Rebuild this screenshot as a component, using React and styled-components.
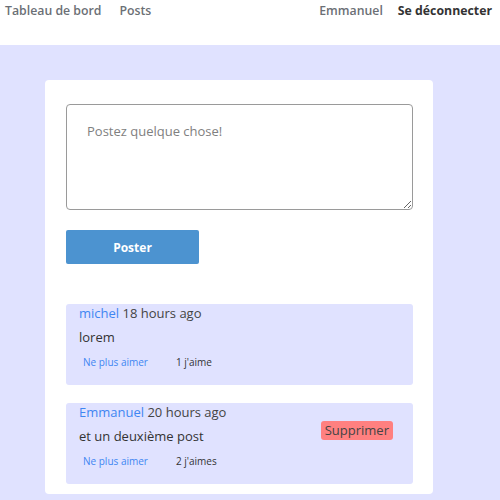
import React from 'react';
import styled, { createGlobalStyle } from 'styled-components';

const GlobalStyle = createGlobalStyle`
    html, body {
        margin: 0;
        padding: 0;
        background: #e0e2ff;
        font-family: 'Open Sans', 'Liberation Sans', sans-serif;
    }
`;

const Nav = styled.nav`
    height: 45px;
    background: #fff;
    display: flex;
    align-items: flex-start;
    justify-content: space-between;
    padding: 2px 8px 0 5px;
    box-sizing: border-box;
`;

const NavGroup = styled.div`
    display: flex;
    gap: ${(p) => p.$gap || 18}px;
`;

const NavLink = styled.a`
    font-size: 12.3px;
    font-weight: ${(p) => (p.$strong ? 700 : 600)};
    color: ${(p) => (p.$strong ? '#333' : '#6b6f75')};
    text-decoration: none;
`;

const Main = styled.main`
    padding: 35px 0 0 45px;
`;

const Card = styled.div`
    width: 388px;
    background: #fff;
    border-radius: 4px;
    padding: 24px 20px 10px 21px;
    box-sizing: border-box;
`;

const TextArea = styled.textarea`
    display: block;
    width: 347px;
    height: 106px;
    box-sizing: border-box;
    border: 1px solid #9a9a9a;
    border-radius: 4px;
    padding: 17px 20px;
    font-family: inherit;
    font-size: 13px;
    color: #333;
    resize: vertical;

    &::placeholder {
        color: #808080;
    }
`;

const PostButton = styled.button`
    margin-top: 20px;
    width: 133px;
    height: 34px;
    border: none;
    border-radius: 2px;
    background: #4c93d0;
    color: #fff;
    font-family: inherit;
    font-size: 12px;
    font-weight: 700;
`;

const PostList = styled.div`
    margin-top: 40px;
    display: flex;
    flex-direction: column;
    gap: 18px;
`;

const Post = styled.div`
    height: 81px;
    background: #e0e2ff;
    border-radius: 3px;
    padding: 0 20px 0 13px;
    box-sizing: border-box;
    display: flex;
    justify-content: space-between;
    align-items: flex-start;
`;

const PostBody = styled.div`
    display: flex;
    flex-direction: column;
`;

const Meta = styled.div`
    font-size: 13px;
    color: #444;
    line-height: 18px;
`;

const Author = styled.span`
    color: #3f86f2;
`;

const Content = styled.div`
    font-size: 13px;
    color: #333;
    line-height: 20px;
    margin-top: 5px;
`;

const Actions = styled.div`
    display: flex;
    align-items: center;
    gap: 28px;
    margin-top: 8px;
    padding-left: 4px;
    font-size: 10px;
`;

const Unlike = styled.a`
    color: #3f86f2;
`;

const Likes = styled.span`
    color: #333;
`;

const DeleteButton = styled.button`
    margin-top: 18px;
    border: none;
    border-radius: 3px;
    background: #ff8080;
    color: #444;
    font-family: inherit;
    font-size: 13px;
    padding: 1px 4px;
    line-height: 17px;
`;

const posts = [
    { author: 'michel', time: '18 hours ago', text: 'lorem', likes: "1 j'aime", own: false },
    { author: 'Emmanuel', time: '20 hours ago', text: 'et un deuxième post', likes: "2 j'aimes", own: true }
];

const App = () => (
    <>
        <GlobalStyle />
        <Nav>
            <NavGroup>
                <NavLink>Tableau de bord</NavLink>
                <NavLink>Posts</NavLink>
            </NavGroup>
            <NavGroup $gap={15}>
                <NavLink>Emmanuel</NavLink>
                <NavLink $strong>Se déconnecter</NavLink>
            </NavGroup>
        </Nav>
        <Main>
            <Card>
                <TextArea placeholder="Postez quelque chose!" />
                <PostButton>Poster</PostButton>
                <PostList>
                    {posts.map((post) => (
                        <Post key={post.author}>
                            <PostBody>
                                <Meta>
                                    <Author>{post.author}</Author> {post.time}
                                </Meta>
                                <Content>{post.text}</Content>
                                <Actions>
                                    <Unlike>Ne plus aimer</Unlike>
                                    <Likes>{post.likes}</Likes>
                                </Actions>
                            </PostBody>
                            {post.own && <DeleteButton>Supprimer</DeleteButton>}
                        </Post>
                    ))}
                </PostList>
            </Card>
        </Main>
    </>
);

export default App;
